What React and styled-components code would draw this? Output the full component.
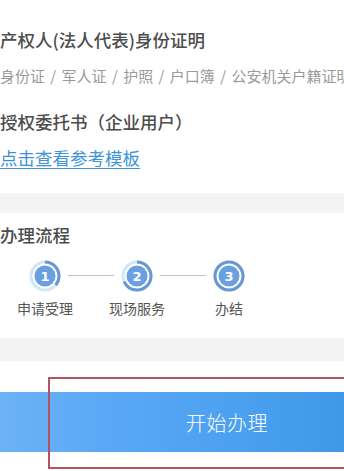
import React from "react";
import styled, { createGlobalStyle } from "styled-components";

const GlobalStyle = createGlobalStyle`
  html, body {
    margin: 0;
    padding: 0;
    background: #ffffff;
    overflow: hidden;
  }
  body {
    font-family: "Noto Sans CJK SC", "Noto Sans", sans-serif;
    width: 344px;
    height: 471px;
  }
`;

const Page = styled.div`
  display: flex;
  flex-direction: column;
  width: 344px;
  height: 471px;
  background: #f4f4f4;
  position: relative;
  overflow: hidden;
`;

const Section = styled.section`
  background: #fff;
  padding: ${({ $pad }) => $pad};
  margin-bottom: ${({ $gap }) => $gap || 0}px;
`;

const Title = styled.h3`
  margin: ${({ $mt }) => $mt || 0}px 0 0;
  font-size: 17.5px;
  line-height: 24px;
  font-weight: 500;
  color: #4d4d4d;
  white-space: nowrap;
`;

const Sub = styled.p`
  margin: 13px 0 0;
  font-size: 15px;
  line-height: 22px;
  color: #9a9a9a;
  white-space: nowrap;
  word-spacing: 2px;
`;

const Link = styled.a`
  display: block;
  margin-top: 12px;
  font-size: 17.5px;
  line-height: 24px;
  color: #3d93d6;
  text-decoration: underline;
  text-underline-offset: 3px;
  text-decoration-thickness: 1px;
`;

const Steps = styled.div`
  display: flex;
  align-items: flex-start;
  padding-left: 29px;
  margin-top: 13px;
`;

const Step = styled.div`
  width: 32px;
  display: flex;
  flex-direction: column;
  align-items: center;
`;

const StepLabel = styled.span`
  margin-top: 6px;
  font-size: 14px;
  line-height: 20px;
  color: #555;
  white-space: nowrap;
`;

const Connector = styled.div`
  width: 46px;
  height: 1px;
  margin: 15px 7px 0;
  background: #b9c3cc;
`;

const Footer = styled.div`
  flex: 1;
  background: #fff;
  padding-top: 31px;
`;

const StartButton = styled.button`
  display: flex;
  align-items: center;
  justify-content: center;
  width: 344px;
  height: 60px;
  border: 0;
  padding: 0 0 0 110px;
  background: linear-gradient(90deg, #6cb2f6 0%, #5aa9f6 30%, #4ba0ef 70%, #3f99e8 100%);
  color: #fff;
  font-family: inherit;
  font-size: 20px;
  font-weight: 300;
  letter-spacing: 0.5px;
`;

const Annotation = styled.div`
  position: absolute;
  left: 48px;
  top: 377px;
  width: 310px;
  height: 88px;
  border: 2px solid #b25562;
  pointer-events: none;
`;

function Ring({ n, progress }) {
  const r = 14;
  const c = 2 * Math.PI * r;
  return (
    <svg width="32" height="32" viewBox="0 0 32 32">
      <circle cx="16" cy="16" r={r} fill="none" stroke="#d4e7f6" strokeWidth="3" />
      <circle
        cx="16"
        cy="16"
        r={r}
        fill="none"
        stroke="#6897d3"
        strokeWidth="3"
        strokeDasharray={`${c * progress} ${c}`}
        transform="rotate(-90 16 16)"
      />
      <circle cx="16" cy="16" r="10.5" fill="#6aa0e2" />
      <text
        x="16"
        y="20.5"
        textAnchor="middle"
        fontSize="13"
        fontWeight="700"
        fill="#fff"
        fontFamily="DejaVu Sans, sans-serif"
      >
        {n}
      </text>
    </svg>
  );
}

const steps = [
  { label: "申请受理", progress: 0.36 },
  { label: "现场服务", progress: 0.68 },
  { label: "办结", progress: 1 },
];

export default function App() {
  return (
    <>
      <GlobalStyle />
      <Page>
        <Section $pad="28px 0 23px" $gap={20}>
          <Title>产权人(法人代表)身份证明</Title>
          <Sub>身份证 / 军人证 / 护照 / 户口簿 / 公安机关户籍证明</Sub>
          <Title $mt={23}>授权委托书（企业用户）</Title>
          <Link>点击查看参考模板</Link>
        </Section>
        <Section $pad="10px 0 20px" $gap={23}>
          <Title>办理流程</Title>
          <Steps>
            {steps.map((s, i) => (
              <React.Fragment key={s.label}>
                {i > 0 && <Connector />}
                <Step>
                  <Ring n={i + 1} progress={s.progress} />
                  <StepLabel>{s.label}</StepLabel>
                </Step>
              </React.Fragment>
            ))}
          </Steps>
        </Section>
        <Footer>
          <StartButton>开始办理</StartButton>
        </Footer>
        <Annotation />
      </Page>
    </>
  );
}
